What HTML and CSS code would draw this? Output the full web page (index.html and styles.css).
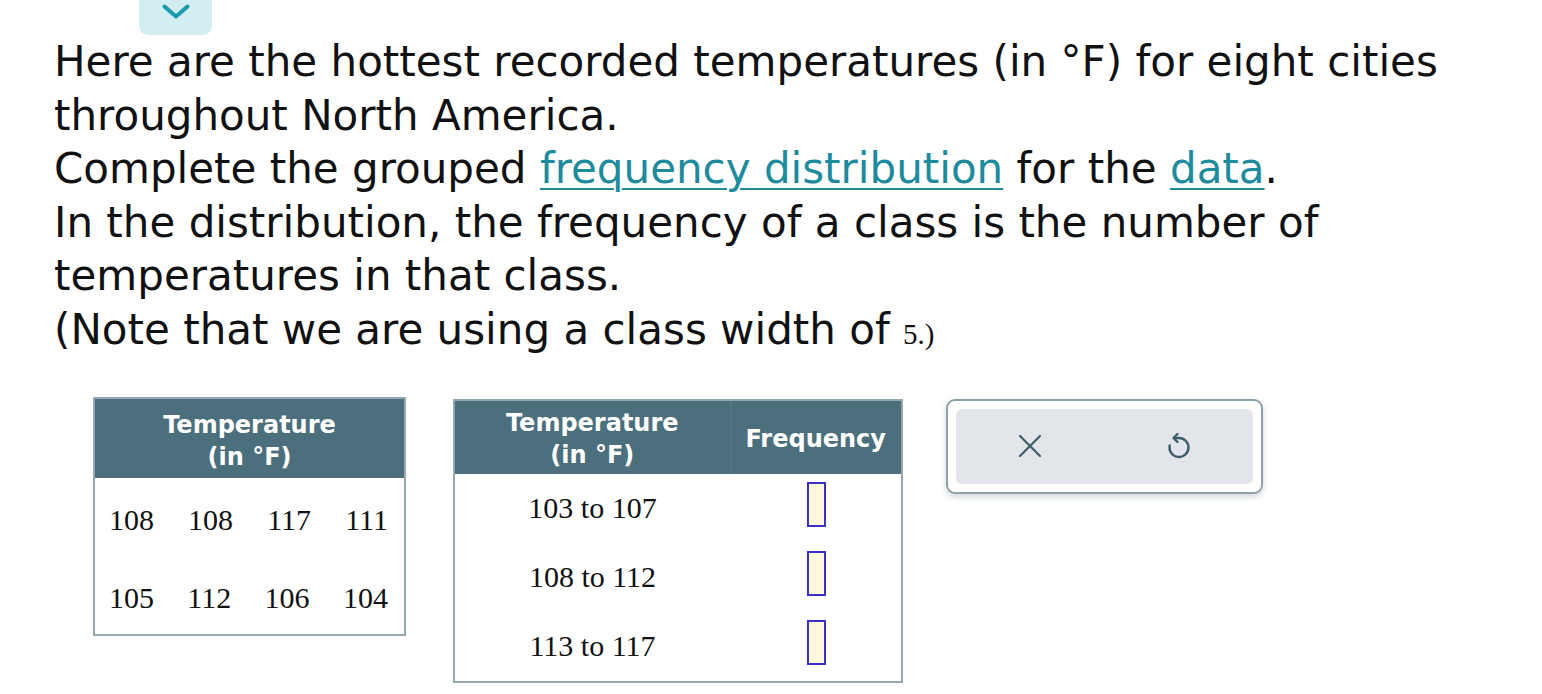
FILE: index.html
```html
<!DOCTYPE html>
<html lang="en">
<head>
<meta charset="utf-8">
<title>Grouped frequency distribution</title>
<link rel="stylesheet" href="styles.css">
</head>
<body>
<div class="page">
  <div class="collapse-btn">
    <svg width="30" height="18" viewBox="0 0 30 18"><path d="M3.5 3.5 L15 13.5 L26.5 3.5" fill="none" stroke="#1b9aaa" stroke-width="4" stroke-linecap="round" stroke-linejoin="round"/></svg>
  </div>
  <div class="prompt">
    <p>Here are the hottest recorded temperatures (in °F) for eight cities throughout North America.</p>
    <p>Complete the grouped <a href="#" class="term">frequency distribution</a> for the <a href="#" class="term">data</a>.</p>
    <p>In the distribution, the frequency of a class is the number of temperatures in that class.</p>
    <p>(Note that we are using a class width of <span class="num">5.)</span></p>
  </div>
  <div class="work">
    <table class="data-table">
      <thead><tr><th>Temperature<br>(in °F)</th></tr></thead>
      <tbody>
        <tr><td><div class="vals"><span>108</span><span>108</span><span>117</span><span>111</span></div></td></tr>
        <tr><td><div class="vals"><span>105</span><span>112</span><span>106</span><span>104</span></div></td></tr>
      </tbody>
    </table>
    <table class="freq-table">
      <thead><tr><th class="c1">Temperature<br>(in °F)</th><th class="c2">Frequency</th></tr></thead>
      <tbody>
        <tr><td class="range">103 to 107</td><td class="inp"><span class="box"></span></td></tr>
        <tr><td class="range">108 to 112</td><td class="inp"><span class="box"></span></td></tr>
        <tr><td class="range">113 to 117</td><td class="inp"><span class="box"></span></td></tr>
      </tbody>
    </table>
    <div class="tools">
      <div class="tools-inner">
        <button class="tool" aria-label="Clear">
          <svg width="24" height="24" viewBox="0 0 24 24"><path d="M2 2 L22 22 M22 2 L2 22" fill="none" stroke="#3f5d69" stroke-width="2.2" stroke-linecap="round"/></svg>
        </button>
        <button class="tool" aria-label="Undo">
          <svg width="26" height="30" viewBox="0 0 26 30"><path d="M8 7 H13 A9.5 9.5 0 1 1 3.7 14.5" fill="none" stroke="#3f5d69" stroke-width="2.4" stroke-linecap="round"/><path d="M11.5 3 L7.5 7 L11.5 11" fill="none" stroke="#3f5d69" stroke-width="2.4" stroke-linecap="round" stroke-linejoin="round"/></svg>
        </button>
      </div>
    </div>
  </div>
</div>
</body>
</html>
```
FILE: styles.css
```css
html, body {
  margin: 0;
  padding: 0;
  background: #ffffff;
}
body {
  font-family: "DejaVu Sans", Verdana, sans-serif;
  color: #111111;
}
.page {
  width: 1542px;
  height: 694px;
  overflow: hidden;
}
.collapse-btn {
  margin-left: 139px;
  width: 73px;
  height: 35px;
  background: #d3eef2;
  border-radius: 0 0 9px 9px;
  display: flex;
  align-items: flex-start;
  justify-content: center;
  padding-top: 3px;
  box-sizing: border-box;
}
.prompt {
  margin-left: 54px;
  width: 1420px;
  margin-top: 0;
}
.prompt p {
  margin: 0;
  font-size: 42px;
  line-height: 53.6px;
}
.term {
  color: #1e8b9c;
  text-decoration: underline;
  text-underline-offset: 5px;
  text-decoration-thickness: 2px;
}
.num {
  font-family: "Liberation Serif", "Times New Roman", serif;
  font-size: 29px;
}
.work {
  display: flex;
  align-items: flex-start;
  margin-top: 35px;
  padding-left: 93px;
}
table {
  border-collapse: collapse;
}
th {
  background: #4b6f7c;
  color: #ffffff;
  font-weight: bold;
  font-size: 24px;
  line-height: 32px;
  padding: 0;
}
.data-table {
  width: 313px;
  border: 2px solid #95a8b0;
}
.data-table th {
  height: 80px;
  padding-top: 5px;
  box-sizing: border-box;
}
.data-table td {
  height: 78px;
  padding: 0;
}
.vals {
  display: flex;
  justify-content: space-between;
  padding: 7px 16px 0 14px;
  font-family: "Liberation Serif", "Times New Roman", serif;
  font-size: 30px;
}
.freq-table {
  width: 450px;
  margin-left: 47px;
  margin-top: 2px;
  border: 2px solid #95a8b0;
}
.freq-table th {
  height: 74px;
  padding-top: 3px;
  box-sizing: border-box;
}
.freq-table th.c1 {
  width: 276px;
  border-right: 1px solid #587b88;
}
.freq-table td {
  height: 69px;
  padding: 0;
  text-align: center;
}
.range {
  font-family: "Liberation Serif", "Times New Roman", serif;
  font-size: 30px;
  padding-right: 0;
}
.inp {
  vertical-align: middle;
}
.box {
  display: inline-block;
  width: 15px;
  height: 41px;
  border: 2px solid #3b30c4;
  background: #fdf8d9;
  vertical-align: middle;
  margin-top: -8px;
  margin-left: 2px;
}
.tools {
  margin-left: 43px;
  margin-top: 2px;
  width: 317px;
  height: 95px;
  box-sizing: border-box;
  border: 2px solid #8ea0a8;
  border-radius: 9px;
  padding: 8px;
  background: #ffffff;
  box-shadow: 0 3px 6px rgba(120, 140, 150, 0.35);
}
.tools-inner {
  height: 100%;
  background: #e2e6ea;
  border-radius: 6px;
  display: flex;
  justify-content: space-around;
  align-items: center;
}
.tool {
  border: 0;
  background: transparent;
  padding: 0;
  width: 60px;
  height: 50px;
  display: flex;
  align-items: center;
  justify-content: center;
}
```
